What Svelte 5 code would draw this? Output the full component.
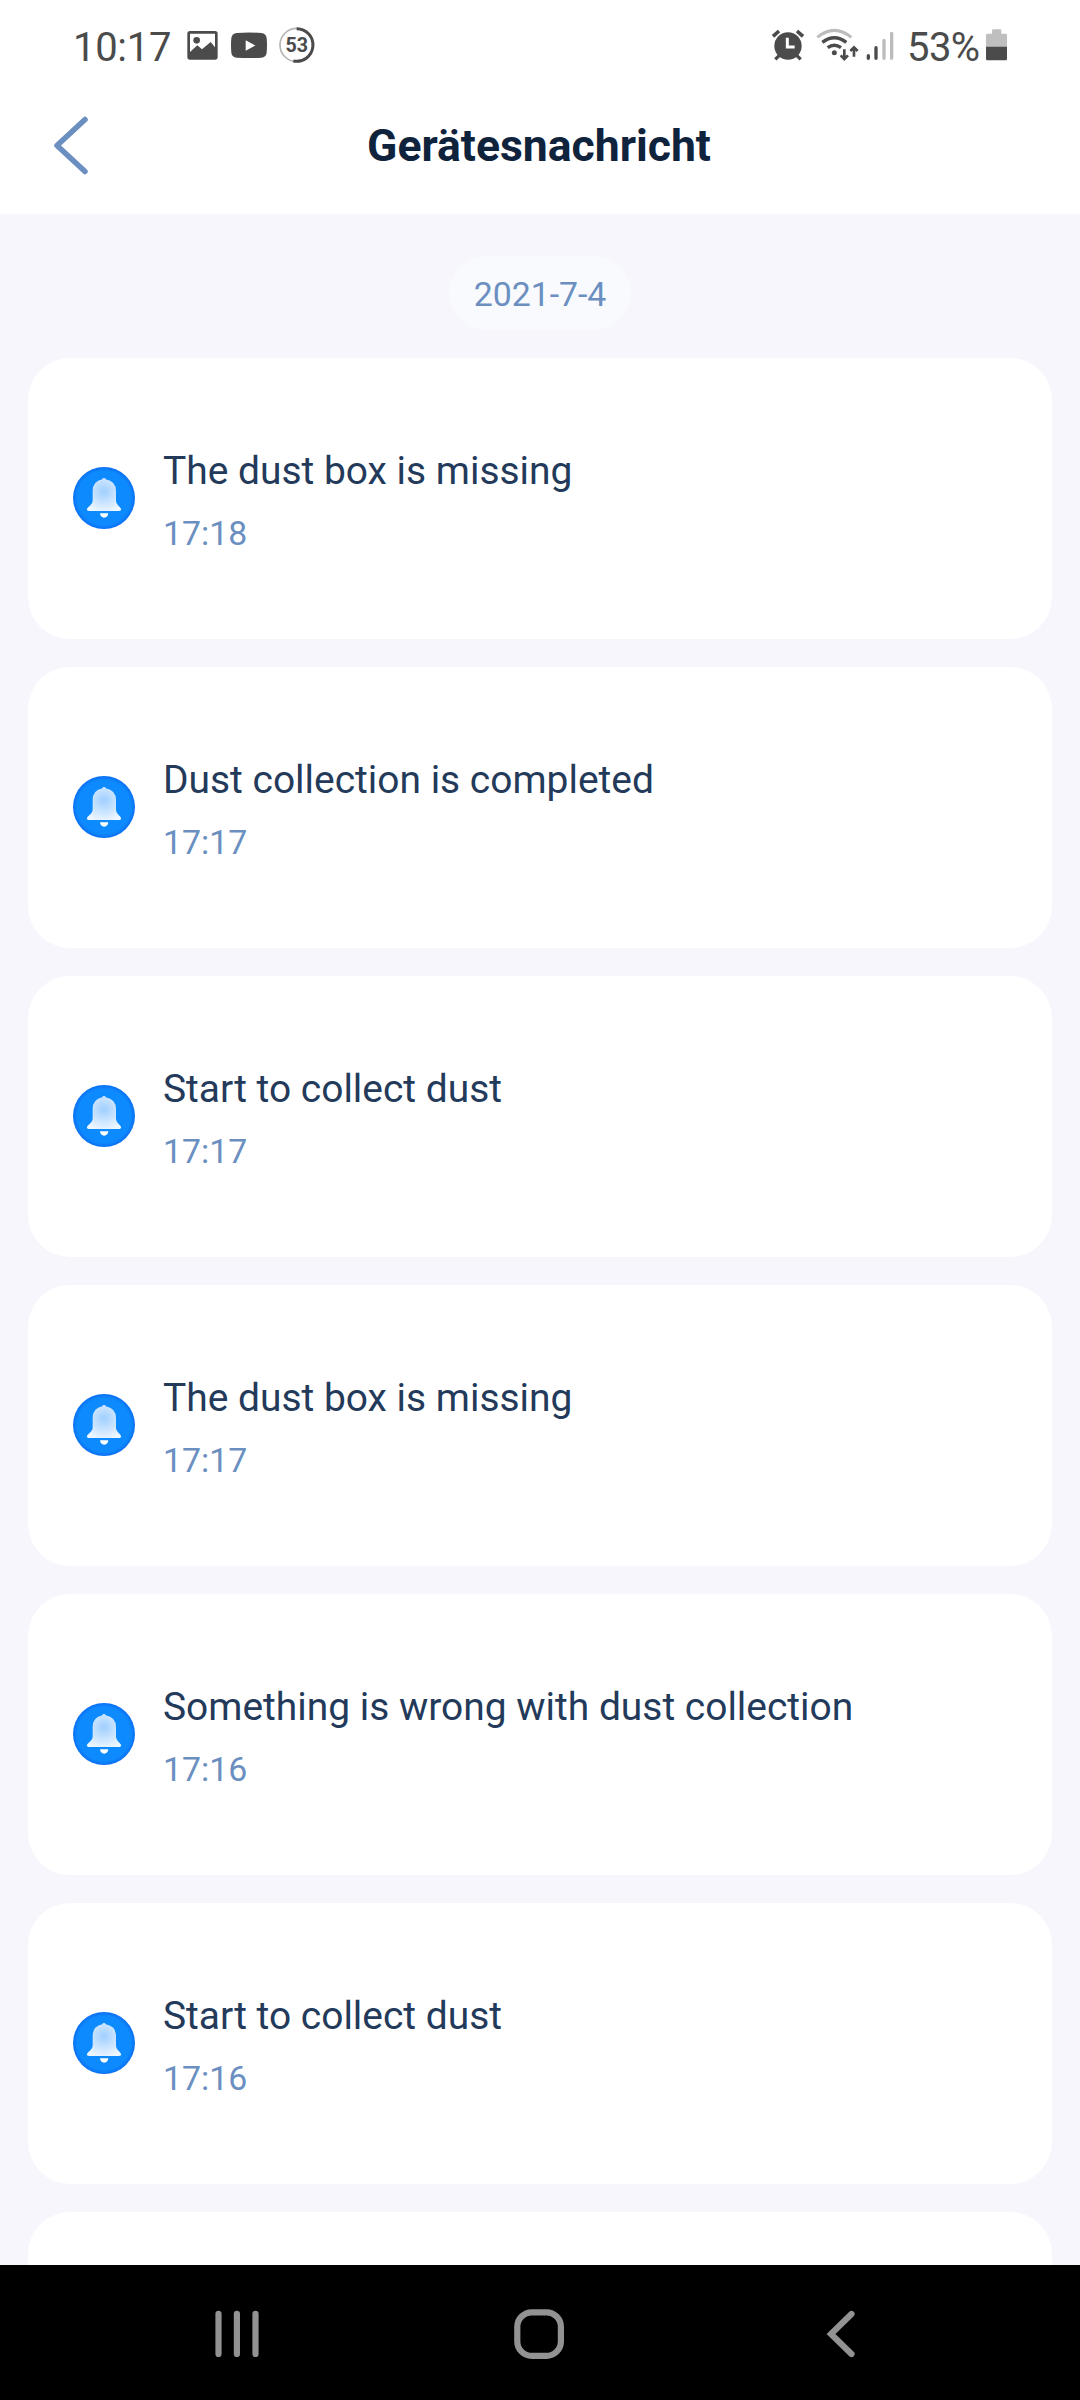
<script lang="ts">
    /** a single message sent by the device */
    type Message = { text: string; time: string };

    /** battery level shown in the status bar */
    let battery: number = 53;

    /** day the messages belong to */
    let date: string = "2021-7-4";

    /** messages, newest first */
    let messages: Message[] = [
        { text: "The dust box is missing", time: "17:18" },
        { text: "Dust collection is completed", time: "17:17" },
        { text: "Start to collect dust", time: "17:17" },
        { text: "The dust box is missing", time: "17:17" },
        { text: "Something is wrong with dust collection", time: "17:16" },
        { text: "Start to collect dust", time: "17:16" }
    ];
</script>

<div class="screen">
    <div class="status-bar">
        <span class="clock">10:17</span>
        <svg class="status-left" viewBox="378 0 390 282">
            <!-- gallery -->
            <rect x="382" y="93" width="91" height="86" rx="8" fill="#4b4b4b" />
            <path d="M390 101H465V142L452 126L426 148L412 136L390 156Z" fill="#fff" />
            <circle cx="410" cy="121" r="10" fill="#4b4b4b" />
            <!-- video -->
            <path d="M530 99Q567 96 604 99Q618 100 620 114Q622 136 620 158Q618 172 604 173Q567 175 530 173Q516 172 514 158Q512 136 514 114Q516 100 530 99Z" fill="#4b4b4b" />
            <path d="M557 121V152L586 136.500Z" fill="#fff" />
            <!-- battery ring -->
            <circle cx="710" cy="135" r="50" fill="none" stroke="#b5b5b5" stroke-width="5" />
            <path d="M710 86A49 49 0 1 1 700 183" fill="none" stroke="#4b4b4b" stroke-width="9" />
            <text x="710" y="157" class="ring-text">{battery}</text>
        </svg>
        <svg class="status-right" viewBox="60 0 380 282">
            <!-- alarm -->
            <circle cx="114" cy="138" r="41" fill="#4b4b4b" />
            <path d="M69 109L87 93M141 93L159 109" stroke="#4b4b4b" stroke-width="11" fill="none" />
            <path d="M88 166L76 178M140 166L152 178" stroke="#4b4b4b" stroke-width="10" fill="none" />
            <path d="M112 113V141H134" stroke="#fff" stroke-width="9" fill="none" />
            <!-- wifi -->
            <path d="M202 112Q253 70 304 112" stroke="#bcbcbc" stroke-width="9" fill="none" />
            <path d="M217 127Q253 99 289 127" stroke="#4b4b4b" stroke-width="10" fill="none" />
            <path d="M233 143Q253 128 273 143" stroke="#4b4b4b" stroke-width="10" fill="none" />
            <circle cx="253" cy="158" r="7.500" fill="#4b4b4b" />
            <path d="M283 148V177M272 166L283 177L294 166M312 170V142M301 153L312 142L323 153" stroke="#4b4b4b" stroke-width="8" fill="none" />
            <!-- signal -->
            <path d="M355 167V175M378 143V175" stroke="#4b4b4b" stroke-width="10" stroke-linecap="round" />
            <path d="M402 121V175M425 100V175" stroke="#bcbcbc" stroke-width="10" stroke-linecap="round" />
        </svg>
        <span class="percent">{battery}%</span>
        <svg class="battery" viewBox="708 0 63 282">
            <path d="M726 101V92Q726 88 730 88H750Q754 88 754 92V101H767Q771 101 771 105V142H708V105Q708 101 712 101Z" fill="#bfbfbf" />
            <path d="M708 140H771V177Q771 181 767 181H712Q708 181 708 177Z" fill="#4b4b4b" />
        </svg>
    </div>

    <header class="header">
        <button class="back" aria-label="Zurück">
            <svg width="40" height="64" viewBox="0 0 40 64">
                <path d="M34 5.500L6 31.500L34 57.500" />
            </svg>
        </button>
        <h1 class="title">Gerätesnachricht</h1>
    </header>

    <main class="content">
        <div class="date">{date}</div>
        {#each messages as message}
            <div class="card">
                <svg class="bell" viewBox="0 0 186 186">
                    <defs>
                        <radialGradient id="bell-fill" cx="50%" cy="40%" r="65%">
                            <stop offset="0" stop-color="#9fcfff" />
                            <stop offset="1" stop-color="#eef6ff" />
                        </radialGradient>
                        <radialGradient id="disc-fill">
                            <stop offset="0.86" stop-color="#0d8bfe" />
                            <stop offset="1" stop-color="#0b6ff2" />
                        </radialGradient>
                    </defs>
                    <circle cx="93" cy="93" r="93" fill="url(#disc-fill)" />
                    <path d="M88 37Q88 33 93 33Q98 33 98 37Q129 43 129 72V100C129 112 139 118 144 125Q146 132 136 132H50Q40 132 42 125C48 118 59 112 59 100V72Q59 43 88 37Z" fill="url(#bell-fill)" />
                    <path d="M81 139H106Q104 152 93.500 152Q83 152 81 139Z" fill="#fff" />
                </svg>
                <div class="message">
                    <p class="text">{message.text}</p>
                    <p class="time">{message.time}</p>
                </div>
            </div>
        {/each}
        <div class="card"></div>
    </main>

    <nav class="nav-bar">
        <svg width="60" height="60" viewBox="0 0 60 60">
            <path d="M11.500 9.800V50M29.900 9.800V50M48.500 9.800V50" />
        </svg>
        <svg width="60" height="60" viewBox="0 0 60 60">
            <rect x="8.300" y="8.300" width="43.600" height="43.600" rx="14.500" />
        </svg>
        <svg width="60" height="60" viewBox="0 0 60 60">
            <path d="M40.500 10L20 30L40.500 50" />
        </svg>
    </nav>
</div>

<style>
    :global(body) {
        margin: 0;
    }

    .screen {
        width: 1080px;
        height: 2400px;
        display: flex;
        flex-direction: column;
        overflow: hidden;
        background-color: #f6f6fc;
        font-family: Roboto, sans-serif;
    }

    .status-bar {
        height: 94px;
        flex: none;
        display: flex;
        align-items: center;
        box-sizing: border-box;
        padding: 0 73px;
        background-color: white;
        color: #4b4b4b;
        font-size: 40px;
    }

    .clock {
        width: 113px;
        letter-spacing: -0.3px;
    }

    .status-left {
        width: 130px;
        height: 94px;
    }

    .ring-text {
        font-size: 59px;
        font-weight: 700;
        text-anchor: middle;
        fill: #4b4b4b;
    }

    .status-right {
        width: 126.670px;
        height: 94px;
        margin-left: auto;
    }

    .percent {
        width: 79px;
        margin-left: 10px;
        letter-spacing: -0.6px;
    }

    .battery {
        width: 21px;
        height: 94px;
    }

    .header {
        height: 120px;
        flex: none;
        display: grid;
        grid-template-columns: 110px 1fr 110px;
        align-items: center;
        box-sizing: border-box;
        padding-bottom: 16px;
        background-color: white;
    }

    .back {
        display: flex;
        padding: 0 0 0 51px;
        border: none;
        background: none;
    }

    .back path {
        fill: none;
        stroke: #6a8fc0;
        stroke-width: 5.500;
        stroke-linecap: round;
        stroke-linejoin: round;
    }

    .title {
        margin: 0;
        padding-right: 2px;
        text-align: center;
        font-size: 44.500px;
        font-weight: 700;
        color: #10233c;
    }

    .content {
        flex: 1;
        min-height: 0;
        display: flex;
        flex-direction: column;
        gap: 28px;
        padding: 42px 28px 0;
        overflow: hidden;
    }

    .date {
        width: 182px;
        height: 74px;
        flex: none;
        align-self: center;
        border-radius: 37px;
        background-color: #f8fafe;
        color: #6a8fc0;
        font-size: 33.800px;
        line-height: 78px;
        text-align: center;
    }

    .card {
        height: 281px;
        flex: none;
        display: flex;
        align-items: center;
        gap: 28px;
        box-sizing: border-box;
        padding: 0 45px 2px;
        border-radius: 42px;
        background-color: white;
    }

    .bell {
        width: 62px;
        height: 62px;
    }

    .message {
        padding-top: 9px;
    }

    .text {
        margin: 0;
        font-size: 38.950px;
        line-height: 62px;
        color: #233a5a;
    }

    .time {
        margin: 1px 0 0;
        font-size: 33.800px;
        line-height: 62px;
        color: #6a8fc0;
    }

    .nav-bar {
        height: 135px;
        flex: none;
        display: flex;
        align-items: center;
        gap: 242px;
        box-sizing: border-box;
        padding: 3px 0 0 207px;
        background-color: black;
    }

    .nav-bar svg {
        fill: none;
        stroke: #929292;
        stroke-width: 6.200;
        stroke-linecap: round;
    }
</style>
